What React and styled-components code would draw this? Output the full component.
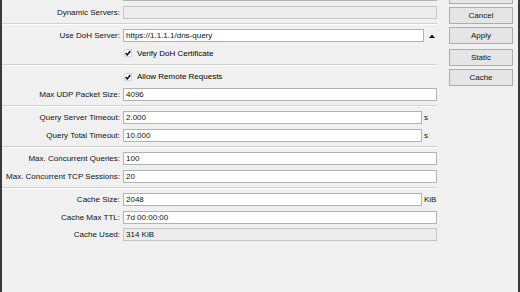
import React from "react";
import styled, { createGlobalStyle } from "styled-components";

const Global = createGlobalStyle`
  html, body { margin: 0; padding: 0; background: #f0f0f0; }
  body { width: 520px; height: 292px; overflow: hidden; font-family: "Liberation Sans", Arial, sans-serif; font-size: 8px; color: #000; }
`;

const Window = styled.div`
  display: flex;
  align-items: flex-start;
  box-sizing: border-box;
  width: 520px;
  height: 292px;
  overflow: hidden;
  background: #f0f0f0;
  border-left: 2px solid #3a3a3a;
  border-right: 2px solid #3a3a3a;
`;

const Form = styled.div`
  width: 435px;
  display: flex;
  flex-direction: column;
  gap: 4.5px;
  margin-top: -12px;
`;

const Row = styled.div`
  display: grid;
  grid-template-columns: 118px 1fr;
  column-gap: 3px;
  align-items: center;
  height: 13px;
`;

const Label = styled.div`
  text-align: right;
  white-space: nowrap;
  color: #111;
`;

const Field = styled.div`
  display: flex;
  align-items: center;
  height: 13px;
`;

const Input = styled.div`
  flex: 1;
  height: 13px;
  box-sizing: border-box;
  border: 1px solid ${(p) => (p.$disabled ? "#c4c4c4" : "#b2b2b2")};
  background: ${(p) => (p.$disabled ? "#ededed" : "#ffffff")};
  padding: 0 2px;
  line-height: 11px;
  white-space: nowrap;
  overflow: hidden;
  color: #111;
`;

const Suffix = styled.div`
  width: ${(p) => p.$w || 15}px;
  box-sizing: border-box;
  padding-left: 2px;
  display: flex;
  align-items: center;
  justify-content: ${(p) => (p.$center ? "center" : "flex-start")};
  color: #111;
`;

const Separator = styled.div`
  height: 2px;
  box-sizing: border-box;
  border-top: 1px solid #d0d0d0;
  border-bottom: 1px solid #ffffff;
  margin: -0.25px 0;
`;

const CheckField = styled.div`
  display: flex;
  align-items: center;
  gap: 5px;
  padding-left: 1px;
`;

const Box = styled.div`
  width: 8px;
  height: 8px;
  box-sizing: border-box;
  border: 1px solid #d6d6d6;
  background: #fff;
  display: flex;
  align-items: center;
  justify-content: center;
`;

const ButtonCol = styled.div`
  width: 64px;
  margin-left: 12px;
  margin-top: -13px;
  display: flex;
  flex-direction: column;
  gap: 3px;
`;

const Button = styled.div`
  height: 17px;
  box-sizing: border-box;
  border: 1px solid #adadad;
  background: #e5e5e5;
  display: flex;
  align-items: center;
  justify-content: center;
  margin-top: ${(p) => (p.$gapTop ? "2px" : "0")};
  color: #111;
`;

const Check = () => (
  <svg width="6" height="6" viewBox="0 0 6 6">
    <path d="M0.6 3.1 L2.3 4.8 L5.4 1" fill="none" stroke="#111" strokeWidth="1.5" />
  </svg>
);

const UpArrow = () => (
  <svg width="6" height="4" viewBox="0 0 6 4">
    <polygon points="0,4 6,4 3,0.5" fill="#111" />
  </svg>
);

function TextRow({ label, value, disabled, suffix, arrow }) {
  return (
    <Row>
      <Label>{label}</Label>
      <Field>
        <Input $disabled={disabled}>{value}</Input>
        {suffix && <Suffix>{suffix}</Suffix>}
        {arrow && (
          <Suffix $w={13} $center>
            <UpArrow />
          </Suffix>
        )}
      </Field>
    </Row>
  );
}

function CheckRow({ label }) {
  return (
    <Row>
      <Label />
      <CheckField>
        <Box>
          <Check />
        </Box>
        <span>{label}</span>
      </CheckField>
    </Row>
  );
}

export default function App() {
  return (
    <>
      <Global />
      <Window>
        <Form>
          <TextRow label="" value="" />
          <TextRow label="Dynamic Servers:" value="" disabled />
          <Separator />
          <TextRow label="Use DoH Server:" value="https://1.1.1.1/dns-query" arrow />
          <CheckRow label="Verify DoH Certificate" />
          <Separator />
          <CheckRow label="Allow Remote Requests" />
          <TextRow label="Max UDP Packet Size:" value="4096" />
          <Separator />
          <TextRow label="Query Server Timeout:" value="2.000" suffix="s" />
          <TextRow label="Query Total Timeout:" value="10.000" suffix="s" />
          <Separator />
          <TextRow label="Max. Concurrent Queries:" value="100" />
          <TextRow label="Max. Concurrent TCP Sessions:" value="20" />
          <Separator />
          <TextRow label="Cache Size:" value="2048" suffix="KiB" />
          <TextRow label="Cache Max TTL:" value="7d 00:00:00" />
          <TextRow label="Cache Used:" value="314 KiB" disabled />
        </Form>
        <ButtonCol>
          <Button />
          <Button>Cancel</Button>
          <Button>Apply</Button>
          <Button $gapTop>Static</Button>
          <Button>Cache</Button>
        </ButtonCol>
      </Window>
    </>
  );
}
